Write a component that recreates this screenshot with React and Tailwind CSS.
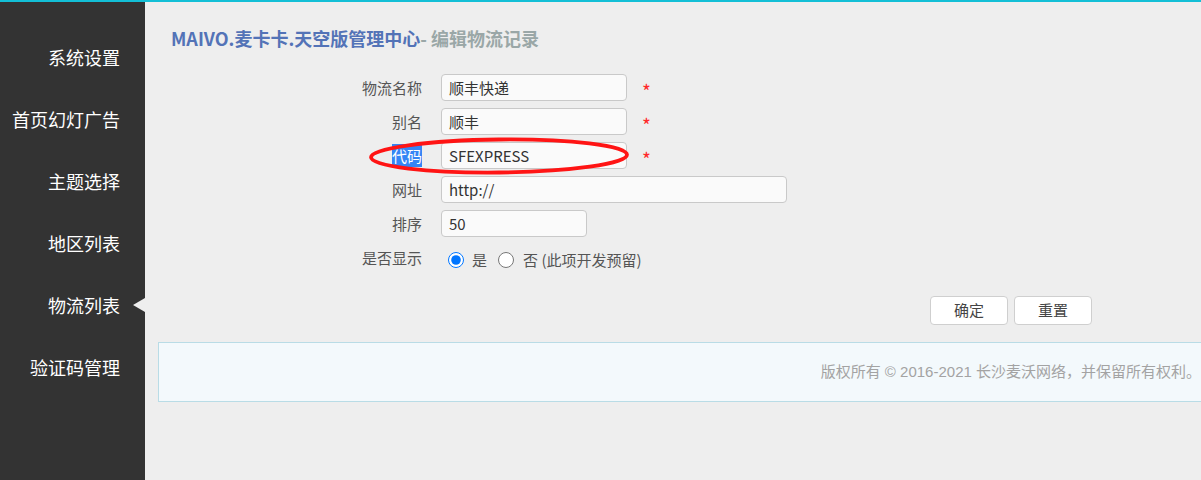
import React from "react";

const cjk = { fontFamily: '"Noto Sans CJK SC", "Noto Sans", sans-serif' };
const foot = { fontFamily: '"Liberation Sans", "Noto Sans CJK SC", sans-serif' };

const menu = ["系统设置", "首页幻灯广告", "主题选择", "地区列表", "物流列表", "验证码管理"];

function Row({ label, children, selected }) {
  return (
    <div className="flex items-center h-[27px]">
      <div className="w-[100px] shrink-0 text-right text-[15px] text-[#555] leading-none">
        {selected ? (
          <span className="bg-[#3585f5] text-white py-[1px]">{label}</span>
        ) : (
          label
        )}
      </div>
      <div className="ml-[19px] flex items-center">{children}</div>
    </div>
  );
}

function Input({ value, w }) {
  return (
    <div
      className="h-[27px] shrink-0 rounded-[4px] border border-[#c9c9c9] bg-[#fafafa] flex items-center px-[7px] text-[15px] text-[#333] leading-none"
      style={{ width: w }}
    >
      {value}
    </div>
  );
}

function Star() {
  return <span className="ml-[15px] text-[#ff2a2a] text-[19px] leading-none mt-[5px]">*</span>;
}

export default function App() {
  return (
    <div className="relative w-[1201px] h-[480px] overflow-hidden flex bg-[#eeeeee]" style={cjk}>
      <div className="w-[145px] shrink-0 h-full bg-[#333333] flex flex-col pt-[45px]">
        {menu.map((m, i) => (
          <div key={m} className="relative h-[62px] flex items-start">
            <div className="w-[120px] text-right text-white text-[18px] leading-[24px]">{m}</div>
            {i === 4 && (
              <div className="absolute right-0 top-[5px] w-0 h-0 border-y-[7px] border-y-transparent border-r-[12px] border-r-[#eeeeee]" />
            )}
          </div>
        ))}
      </div>
      <div className="relative flex-1 flex flex-col min-w-0">
        <div className="pl-[26px] pt-[26px] text-[18px] font-bold leading-[24px] whitespace-nowrap">
          <span className="text-[#5373b7]">MAIVO.麦卡卡.天空版管理中心</span>
          <span className="text-[#9aa7a7]">- 编辑物流记录</span>
        </div>
        <div className="pl-[177px] mt-[24px] flex flex-col gap-[7px]">
          <Row label="物流名称">
            <Input value="顺丰快递" w={186} />
            <Star />
          </Row>
          <Row label="别名">
            <Input value="顺丰" w={186} />
            <Star />
          </Row>
          <Row label="代码" selected>
            <Input value="SFEXPRESS" w={186} />
            <Star />
          </Row>
          <Row label="网址">
            <Input value="http://" w={346} />
          </Row>
          <Row label="排序">
            <Input value="50" w={146} />
          </Row>
          <Row label="是否显示">
            <div className="flex items-center text-[15px] text-[#555] leading-none pl-[7px] pt-[4px] whitespace-nowrap">
              <input type="radio" name="show" defaultChecked className="m-0 w-[16px] h-[16px] accent-[#0075ff]" />
              <span className="ml-[8px]">是</span>
              <input type="radio" name="show" className="m-0 ml-[11px] w-[16px] h-[16px]" />
              <span className="ml-[9px]">否 (此项开发预留)</span>
            </div>
          </Row>
        </div>
        <div className="flex gap-[6px] ml-[785px] mt-[25px]">
          <div className="w-[78px] h-[29px] shrink-0 rounded-[4px] border border-[#cfcfcf] bg-white flex items-center justify-center text-[15px] text-[#444]">
            确定
          </div>
          <div className="w-[78px] h-[29px] shrink-0 rounded-[4px] border border-[#cfcfcf] bg-white flex items-center justify-center text-[15px] text-[#444]">
            重置
          </div>
        </div>
        <div
          className="ml-[13px] mt-[17px] w-[1100px] shrink-0 h-[60px] bg-[#f3f9fc] border border-[#b9dce6] flex items-center"
          style={foot}
        >
          <div className="w-[1042px] text-right text-[15px] text-[#a3a3a3] whitespace-nowrap">
            版权所有 © 2016-2021 长沙麦沃网络，并保留所有权利。
          </div>
        </div>
      </div>
      <div className="absolute top-0 left-0 right-0 h-[2px] bg-[#13bfd6]" />
      <svg className="absolute left-0 top-0 pointer-events-none" width="1201" height="480">
        <ellipse cx="499" cy="156" rx="128" ry="16.5" fill="none" stroke="#ff1414" strokeWidth="3.8" transform="rotate(-0.6 499 156)" />
      </svg>
    </div>
  );
}
